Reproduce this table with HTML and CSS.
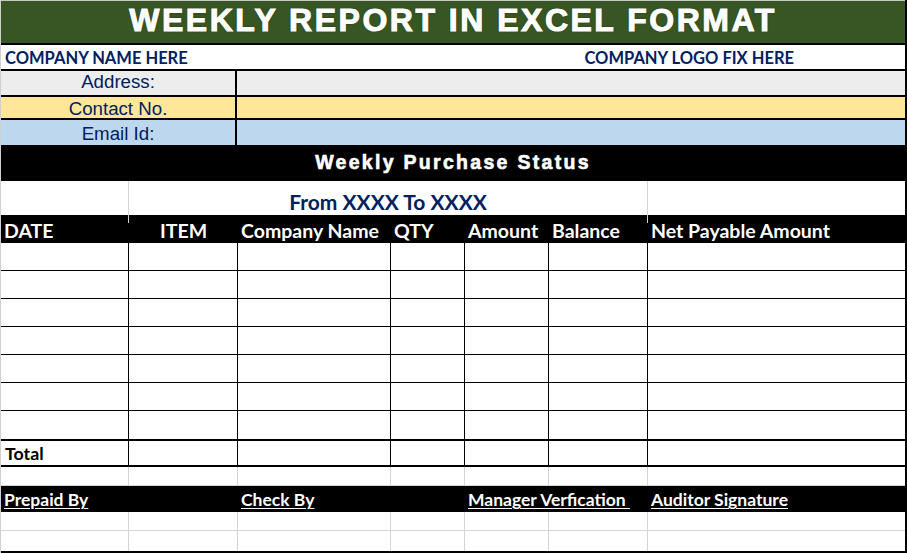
FILE: index.html
```html
<!DOCTYPE html>
<html>
<head>
<meta charset="utf-8">
<link rel="stylesheet" href="styles.css">
</head>
<body>
<div class="sheet">
  <div class="title">WEEKLY REPORT IN EXCEL FORMAT</div>
  <div class="company">
    <span class="name">COMPANY NAME HERE</span>
    <span class="logo">COMPANY LOGO FIX HERE</span>
  </div>
  <div class="info grey"><div class="label">Address:</div><div class="val"></div></div>
  <div class="info yellow"><div class="label">Contact No.</div><div class="val"></div></div>
  <div class="info blue"><div class="label">Email Id:</div><div class="val"></div></div>
  <div class="band">Weekly Purchase Status</div>
  <div class="from"><div class="c1"></div><div class="range">From XXXX To XXXX</div><div class="c3"></div></div>
  <div class="grid head">
    <div>DATE</div><div class="center">ITEM</div><div>Company Name</div><div>QTY</div><div>Amount</div><div>Balance</div><div>Net Payable Amount</div>
  </div>
  <div class="grid data"><div></div><div></div><div></div><div></div><div></div><div></div><div></div></div>
  <div class="grid data"><div></div><div></div><div></div><div></div><div></div><div></div><div></div></div>
  <div class="grid data"><div></div><div></div><div></div><div></div><div></div><div></div><div></div></div>
  <div class="grid data"><div></div><div></div><div></div><div></div><div></div><div></div><div></div></div>
  <div class="grid data"><div></div><div></div><div></div><div></div><div></div><div></div><div></div></div>
  <div class="grid data"><div></div><div></div><div></div><div></div><div></div><div></div><div></div></div>
  <div class="grid data last"><div></div><div></div><div></div><div></div><div></div><div></div><div></div></div>
  <div class="grid total"><div>Total</div><div></div><div></div><div></div><div></div><div></div><div></div></div>
  <div class="grid blank"><div></div><div></div><div></div><div></div><div></div><div></div><div></div></div>
  <div class="grid sign">
    <div class="wide2"><u>Prepaid By</u></div><div class="wide2"><u>Check By</u></div><div class="wide2"><u>Manager Verfication&nbsp;</u></div><div><u>Auditor Signature</u></div>
  </div>
  <div class="grid blank"><div></div><div></div><div></div><div></div><div></div><div></div><div></div></div>
  <div class="grid blank end"><div></div><div></div><div></div><div></div><div></div><div></div><div></div></div>
</div>
</body>
</html>
```

FILE: styles.css
```css
* { box-sizing: border-box; }
html, body { margin: 0; padding: 0; background: #fff; }
body { font-family: "Lato", "Carlito", sans-serif; }

.sheet {
  width: 907px;
  height: 553px;
  border-right: 2px solid #000;
  border-left: 1px solid #d0d0d0;
  overflow: hidden;
}

.title {
  height: 45px;
  background: #375623;
  border-top: 1px solid #c8c8c8;
  border-bottom: 2px solid #000;
  color: #fff;
  font-family: "Liberation Sans", Arial, sans-serif;
  font-weight: bold;
  font-size: 32px;
  letter-spacing: 2.5px;
  line-height: 38px;
  text-align: center;
  -webkit-text-stroke: 1px #fff;
  text-shadow: 0 0 2px #1a2a10;
}

.company {
  height: 26px;
  display: flex;
  align-items: center;
  border-bottom: 2px solid #000;
  color: #002060;
  font-weight: bold;
  font-size: 16.5px;
  padding-left: 4px;
  padding-top: 2px;
}
.company .logo { margin-left: auto; margin-right: 111px; }

.info {
  display: flex;
  border-bottom: 2px solid #000;
  color: #002060;
  font-family: "Liberation Sans", Arial, sans-serif;
  font-size: 18.7px;
}
.info .label {
  width: 236px;
  border-right: 2px solid #000;
  text-align: center;
}
.info .val { flex: 1; }
.grey { height: 26px; background: #ededed; line-height: 21px; }
.yellow { height: 23px; background: #ffe699; line-height: 23px; }
.blue { height: 25px; background: #bdd7ee; line-height: 27px; border-bottom: none; }

.band {
  height: 36px;
  background: #000;
  color: #fff;
  font-family: "Liberation Sans", Arial, sans-serif;
  font-weight: bold;
  font-size: 19.5px;
  letter-spacing: 2.3px;
  -webkit-text-stroke: 0.6px #fff;
  line-height: 35px;
  text-align: center;
}

.from {
  height: 34px;
  display: grid;
  grid-template-columns: 128px 519px 1fr;
}
.from .c1 { border-right: 1px solid #d4d4d4; }
.from .range {
  border-right: 1px solid #d4d4d4;
  color: #002060;
  font-weight: bold;
  font-size: 21px;
  line-height: 42px;
  text-align: center;
}

.grid {
  display: grid;
  grid-template-columns: 128px 109px 153px 74px 84px 99px 1fr;
}
.grid > div { border-right: 1px solid #000; }
.grid > div:last-child { border-right: none; }

.head {
  height: 28px;
  background: #000;
  color: #fff;
  font-weight: bold;
  font-size: 19.5px;
  line-height: 31px;
}
.head > div { border-right: none; padding-left: 3px; white-space: nowrap; }
.head > .center { text-align: center; padding-left: 0; }

.data { height: 28px; border-bottom: 1px solid #000; }
.data.last { height: 30px; border-bottom: 2px solid #000; }

.total {
  height: 26px;
  border-bottom: 2px solid #000;
  font-weight: bold;
  font-size: 17.8px;
  line-height: 25px;
}
.total > div:first-child { padding-left: 4px; }

.blank { height: 19px; border-bottom: 1px solid #d4d4d4; }
.blank > div { border-right: 1px solid #d4d4d4; }
.blank.end { height: 22px; border-bottom: 2px solid #000; }

.sign {
  height: 26px;
  background: #000;
  color: #fff;
  font-weight: bold;
  font-size: 17.5px;
  line-height: 28px;
  grid-template-columns: 237px 227px 183px 1fr;
}
.sign > div { border-right: none; padding-left: 3px; white-space: nowrap; }
.sign u { text-decoration-thickness: 1px; text-underline-offset: 2px; }
```
